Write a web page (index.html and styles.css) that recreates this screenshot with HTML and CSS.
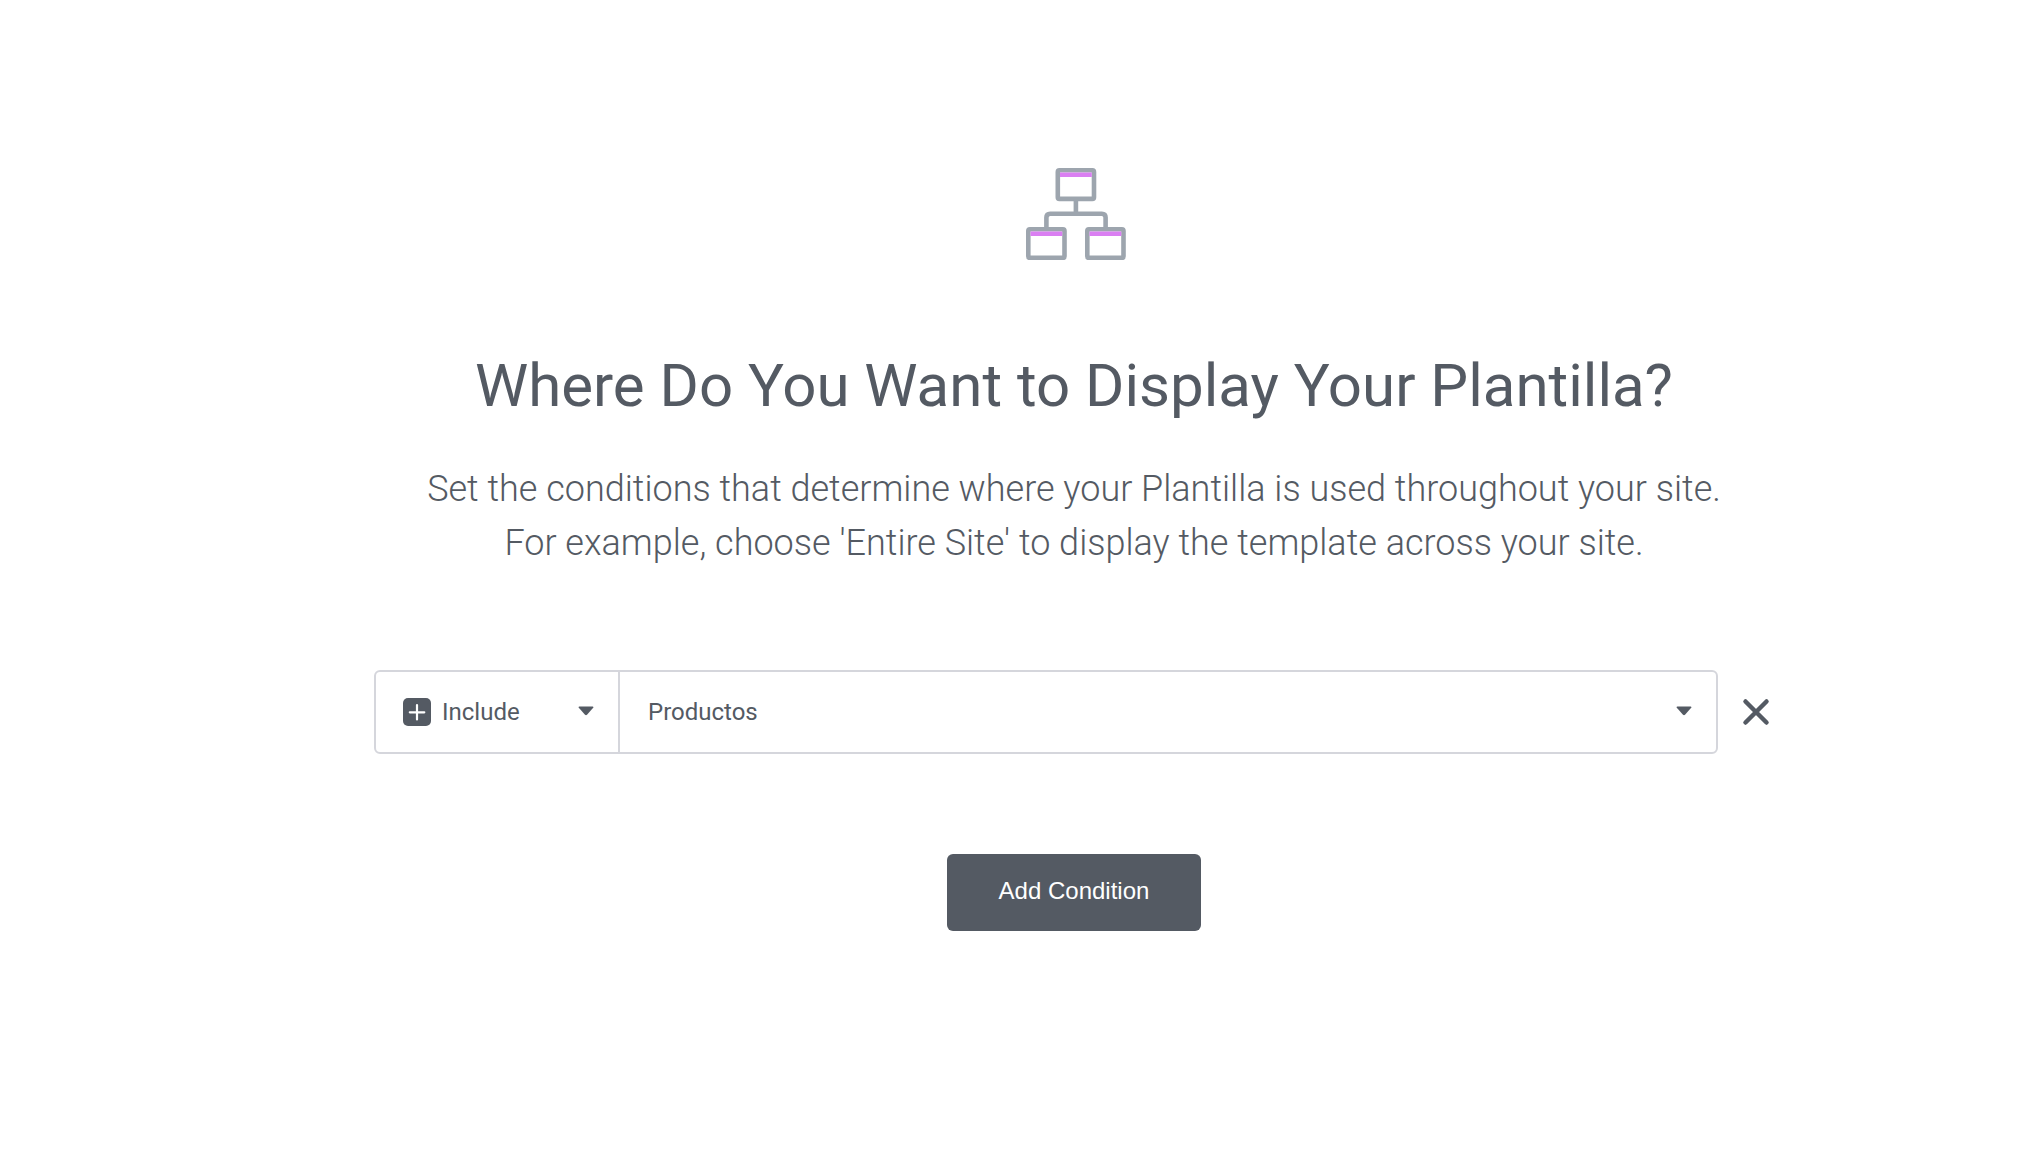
FILE: index.html
```html
<!DOCTYPE html>
<html lang="en">
<head>
<meta charset="utf-8">
<meta name="viewport" content="width=device-width, initial-scale=1">
<title>Display Conditions</title>
<link rel="stylesheet" href="styles.css">
</head>
<body>
<main class="conditions">
  <svg class="sitemap" viewBox="-4 0 104 92" aria-hidden="true">
    <g fill="none" stroke="#9da5ae" stroke-width="4.6">
      <rect x="31.8" y="2.3" width="36.2" height="28.6" rx="1.6"/>
      <rect x="2.3" y="61.3" width="36.2" height="28.6" rx="1.6"/>
      <rect x="61.3" y="61.3" width="36.2" height="28.6" rx="1.6"/>
      <path d="M49.9 31v14.7M20.4 61V49.5q0-3.800 3.800-3.800h51.600q3.800 0 3.800 3.800V61"/>
    </g>
    <g fill="#da7ff2">
      <path d="M34 4.500h31.800v4.500H34zM4.500 63.500h31.800v4.500H4.500zM63.500 63.500h31.800v4.500H63.500z"/>
    </g>
  </svg>
  <h1 class="title">Where Do You Want to Display Your Plantilla?</h1>
  <p class="description">Set the conditions that determine where your Plantilla is used throughout your site.<br>For example, choose 'Entire Site' to display the template across your site.</p>
  <form class="form">
    <div class="row">
      <div class="controls">
        <div class="field field-type">
          <svg class="plus" viewBox="0 0 28 28" aria-hidden="true">
            <rect width="28" height="28" rx="5" fill="#545a63"/>
            <path d="M14 7v14.500M6.800 14.300h14.500" stroke="#fff" stroke-width="2.200" stroke-linecap="round"/>
          </svg>
          <select class="select" aria-label="Condition type">
            <option>Include</option>
            <option>Exclude</option>
          </select>
          <svg class="caret" viewBox="0 0 16 12" aria-hidden="true"><path d="M1.300.5h13.400q1.300.2.500 1.300L9 8.800q-1 .9-2 0L.8 1.800Q0 .7 1.300.5z"/></svg>
        </div>
        <div class="field field-name">
          <select class="select" aria-label="Condition">
            <option>Productos</option>
          </select>
          <svg class="caret" viewBox="0 0 16 12" aria-hidden="true"><path d="M1.300.5h13.400q1.300.2.500 1.300L9 8.800q-1 .9-2 0L.8 1.800Q0 .7 1.300.5z"/></svg>
        </div>
      </div>
      <button class="remove" type="button" aria-label="Remove condition">
        <svg class="cross" viewBox="0 0 28 28" aria-hidden="true"><path d="M3.500 3.500l21 21M24.500 3.500l-21 21"/></svg>
      </button>
    </div>
    <button class="add" type="button">Add Condition</button>
  </form>
</main>
</body>
</html>
```
FILE: styles.css
```css
* {
  box-sizing: border-box;
}

body {
  margin: 0;
  background: #fff;
  color: #545a63;
  font-family: Roboto, sans-serif;
}

.conditions {
  display: flex;
  flex-direction: column;
  align-items: center;
  padding: 168px 40px 100px 144px;
}

.sitemap {
  width: 104px;
  height: 92px;
}

.title {
  margin: 90px 0 40px;
  font-size: 60px;
  font-weight: 400;
  line-height: 72px;
  text-align: center;
}

.description {
  margin: 0 0 100px;
  font-size: 36px;
  font-weight: 300;
  line-height: 54px;
  text-align: center;
}

.form {
  display: flex;
  flex-direction: column;
  align-items: center;
  gap: 100px;
  width: 100%;
  max-width: 1400px;
}

.row {
  display: flex;
  align-items: center;
  gap: 20px;
  width: 100%;
}

.controls {
  display: flex;
  flex: 1;
  height: 84px;
  border: 2px solid #d5d6dc;
  border-radius: 6px;
}

.field {
  display: grid;
  align-items: center;
}

.field > * {
  grid-area: 1 / 1;
}

.field-type {
  width: 244px;
  border-right: 2px solid #d5d6dc;
}

.field-name {
  flex: 1;
}

.select {
  appearance: none;
  width: 100%;
  height: 80px;
  padding: 0 60px 0 28px;
  border: 0;
  background: transparent;
  color: inherit;
  font: 400 24px/32px Roboto, sans-serif;
}

.field-type .select {
  padding-left: 66px;
}

.plus {
  width: 28px;
  height: 28px;
  margin-left: 27px;
}

.caret {
  justify-self: end;
  width: 16px;
  height: 12px;
  margin-right: 24px;
  fill: #545a63;
  pointer-events: none;
}

.remove {
  display: flex;
  align-items: center;
  justify-content: center;
  width: 36px;
  height: 36px;
  padding: 0;
  border: 0;
  background: transparent;
}

.cross {
  width: 28px;
  height: 28px;
  fill: none;
  stroke: #545a63;
  stroke-width: 4.5;
  stroke-linecap: round;
}

.add {
  padding: 21px 52px 24px;
  border: 0;
  border-radius: 6px;
  background: #545a63;
  color: #fff;
  font: 400 24px/32px "Liberation Sans", Arial, sans-serif;
}
```
